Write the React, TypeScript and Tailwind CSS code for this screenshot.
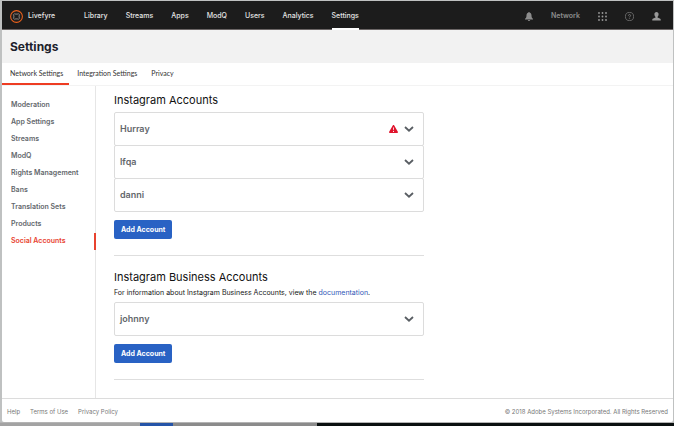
import type { ReactNode } from "react";

const navItems = ["Library", "Streams", "Apps", "ModQ", "Users", "Analytics", "Settings"];
const tabs = ["Network Settings", "Integration Settings", "Privacy"];
const sections = [
  "Moderation",
  "App Settings",
  "Streams",
  "ModQ",
  "Rights Management",
  "Bans",
  "Translation Sets",
  "Products",
  "Social Accounts",
];

function Logo() {
  return (
    <svg viewBox="0 0 26 26" className="size-[13px]" fill="none" aria-hidden="true">
      <circle cx="13" cy="13" r="11.8" stroke="#e8601c" strokeWidth="2.200" />
      <path
        d="M9.500 7 11 8.200h4L16.500 7l1.300 1.900 1.500.8-1.100 1.800v3l1.100 1.800-1.500.8-1.300 1.900-1.500-1.200h-4L9.500 19l-1.300-1.900-1.500-.8 1.100-1.800v-3L6.700 9.700l1.500-.8z"
        stroke="#a8a09b"
        strokeWidth="1.600"
      />
    </svg>
  );
}

function Bell() {
  return (
    <svg viewBox="0 0 16 18" className="h-[9px] w-2" fill="#8c8c8c" aria-hidden="true">
      <path d="M8 0c1 0 1.600.6 1.600 1.500C12 2.200 13 4 13 6.500c0 4 .8 5.500 3 7V15H0v-1.500c2.200-1.500 3-3 3-7C3 4 4 2.200 6.400 1.500 6.400.6 7 0 8 0zM5.500 16h5c-.3 1.300-1.300 2-2.500 2s-2.200-.7-2.500-2z" />
    </svg>
  );
}

function Grid() {
  const cells = [0, 1, 2];
  return (
    <svg viewBox="0 0 9 9" className="size-[9px]" fill="#999999" aria-hidden="true">
      {cells.map((r) => cells.map((c) => <circle key={`${r}-${c}`} cx={1 + c * 3.5} cy={1 + r * 3.5} r="0.9" />))}
    </svg>
  );
}

function HelpIcon() {
  return (
    <svg viewBox="0 0 18 18" className="size-[9px]" fill="none" stroke="#8a8a8a" aria-hidden="true">
      <circle cx="9" cy="9" r="8.200" strokeWidth="1.300" />
      <path d="M6.800 7.300c0-1.400 1-2.200 2.200-2.200s2.200.8 2.200 2c0 1.600-2.200 1.700-2.200 3.400" strokeWidth="1.500" />
      <circle cx="9" cy="12.700" r=".6" />
    </svg>
  );
}

function User() {
  return (
    <svg viewBox="0 0 18 18" className="size-[9px]" fill="#999999" aria-hidden="true">
      <path d="M9 0c2.600 0 4.200 1.900 4.200 4.600 0 2.200-.9 4-2 5v1.600c0 .8 6.300 1.600 6.300 4.300V17H.5v-1.500c0-2.700 6.300-3.500 6.300-4.300V9.600c-1.100-1-2-2.800-2-5C4.800 1.900 6.400 0 9 0z" />
    </svg>
  );
}

function Warning() {
  return (
    <svg viewBox="0 0 18 16" className="h-2 w-[9px]" role="img" aria-label="Warning">
      <path d="M9 0c.7 0 1.200.3 1.500.9l7.200 12.700c.6 1.200 0 2.400-1.300 2.400H1.600C.3 16-.3 14.800.3 13.600L7.500.9C7.800.3 8.300 0 9 0z" fill="#e0142d" />
      <path d="M8.100 5h1.800l-.3 5.500H8.400zM8.100 12h1.800v1.800H8.100z" fill="#ffffff" />
    </svg>
  );
}

function Chevron() {
  return (
    <svg viewBox="0 0 20 12" className="h-[6px] w-[10px]" fill="none" aria-hidden="true">
      <path d="m2 2 8 7.500L18 2" stroke="#595e63" strokeWidth="3.600" />
    </svg>
  );
}

function Account({ name, warn = false }: { name: string; warn?: boolean }) {
  return (
    <li>
      <button
        type="button"
        className="flex h-[34px] w-full items-center rounded-xs border border-[#dcdcdc] pr-[9px] pl-[5px] text-[9px] font-semibold text-[#63676c]"
      >
        <span>{name}</span>
        <span className="ml-auto flex items-center gap-[6px]">
          {warn && <Warning />}
          <Chevron />
        </span>
      </button>
    </li>
  );
}

function AccountGroup({ title, note, children }: { title: string; note?: ReactNode; children: ReactNode }) {
  return (
    <section className="border-b border-[#dedede] pb-4">
      <h2 className="text-[11px] leading-[14px] text-[#111111]">{title}</h2>
      {note}
      <ul className="mt-[5px] -space-y-px">{children}</ul>
      <button type="button" className="mt-2 flex h-[19px] items-center rounded-xs bg-[#2962c4] px-[7px] pt-px text-[7px] font-bold text-white">
        Add Account
      </button>
    </section>
  );
}

export default function App() {
  return (
    <div className="flex min-h-screen flex-col bg-[#bfc1c1] pt-px pr-px pl-[2px] font-['Inter','Liberation_Sans',sans-serif]">
      <div className="flex grow flex-col rounded-b-xs bg-white">
        <header className="flex h-[29px] items-stretch border-b border-[#6b6666] bg-[#1c1c1c] pr-3 pl-2 text-[7px] font-medium text-[#e4e4e4]">
          <a href="#" className="flex items-center gap-[5px] pt-[2px]">
            <Logo />
            Livefyre
          </a>
          <nav className="ml-[29px] flex gap-[18px]">
            {navItems.map((item) => (
              <a
                key={item}
                href="#"
                aria-current={item === "Settings" ? "page" : undefined}
                className={`-mb-px flex items-center border-b-2 pt-[3px] ${item === "Settings" ? "border-white" : "border-transparent"}`}
              >
                {item}
              </a>
            ))}
          </nav>
          <div className="ml-auto flex items-center gap-[18px] pt-[2px]">
            <button type="button" aria-label="Notifications"><Bell /></button>
            <button type="button" className="font-semibold text-[#8c8c8c]">Network</button>
            <button type="button" aria-label="Apps"><Grid /></button>
            <button type="button" aria-label="Help"><HelpIcon /></button>
            <button type="button" aria-label="Profile"><User /></button>
          </div>
        </header>

        <div className="flex h-[33px] items-center bg-[#f2f2f2] px-2">
          <h1 className="text-[12px] font-bold text-[#1d222b]">Settings</h1>
        </div>

        <nav className="flex h-[23px] border-b border-[#f3f3f3] font-['Lato',sans-serif] text-[7px] text-[#333333]">
          {tabs.map((tab, i) => (
            <a
              key={tab}
              href="#"
              className={`flex items-center border-b-2 pr-[6px] pl-2 ${i === 0 ? "border-[#ee3c22]" : "border-transparent"}`}
            >
              {tab}
            </a>
          ))}
        </nav>

        <div className="flex grow">
          <nav className="w-[94px] shrink-0 border-r border-[#e6e6e6] pt-[11px]">
            {sections.map((s) => (
              <a
                key={s}
                href="#"
                className={`-mr-px flex h-[17px] items-center border-r-2 pl-[9px] text-[7px] font-semibold ${
                  s === "Social Accounts" ? "border-[#e8432f] text-[#e8432f]" : "border-transparent text-[#63676c]"
                }`}
              >
                {s}
              </a>
            ))}
          </nav>
          <main className="max-w-[328px] grow pt-[7px] pb-[18px] pl-[18px]">
            <AccountGroup title="Instagram Accounts">
              <Account name="Hurray" warn />
              <Account name="lfqa" />
              <Account name="danni" />
            </AccountGroup>
            <div className="mt-[14px]">
              <AccountGroup
                title="Instagram Business Accounts"
                note={
                  <p className="mt-[5px] text-[7px] leading-[8px] text-[#161616]">
                    For information about Instagram Business Accounts, view the{" "}
                    <a href="#" className="text-[#3157b7]">documentation</a>.
                  </p>
                }
              >
                <Account name="johnny" />
              </AccountGroup>
            </div>
          </main>
        </div>

        <footer className="flex h-6 items-center gap-[10px] border-t border-[#dcdcdc] px-[5px] pt-[2px] text-[6px] text-[#777777]">
          <a href="#">Help</a>
          <a href="#">Terms of Use</a>
          <a href="#">Privacy Policy</a>
          <span className="ml-auto">© 2018 Adobe Systems Incorporated. All Rights Reserved</span>
        </footer>
      </div>
      <div className="-mr-px -ml-[2px] flex h-[5px] border-y border-[#b4b4b4]">
        <div className="w-[140px] bg-[#a3a3a3]" />
        <div className="w-[33px] bg-[#2554a8]" />
        <div className="w-[144px] bg-[#8b8b8b]" />
        <div className="grow bg-[#0a1010]" />
      </div>
    </div>
  );
}
